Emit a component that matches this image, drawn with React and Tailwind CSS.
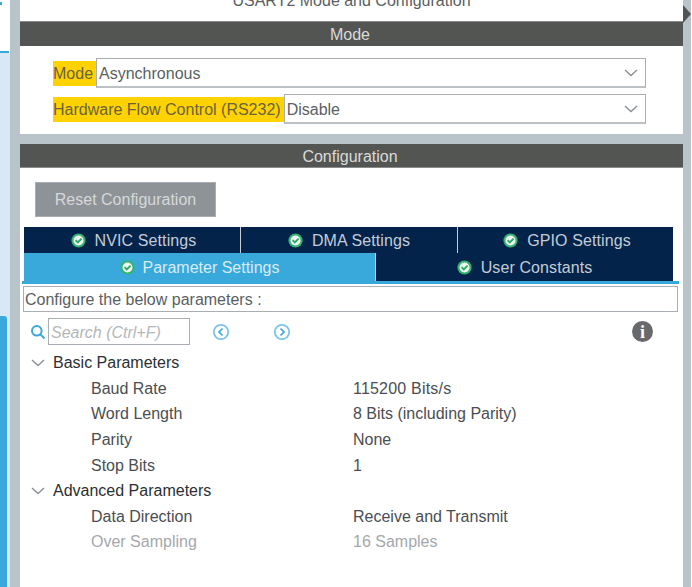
import React from "react";

const Check = () => (
  <svg width="15" height="15" viewBox="0 0 15 15" className="shrink-0">
    <circle cx="7.5" cy="7.5" r="7.1" fill="#34b36f" />
    <circle cx="7.5" cy="7.5" r="5" fill="#eef7f2" />
    <path d="M4.6 7.2 L6.8 9.4 L10.6 5.6" fill="none" stroke="#2fa866" strokeWidth="1.9" />
  </svg>
);

const Chevron = ({ className = "" }) => (
  <svg width="14" height="8" viewBox="0 0 14 8" className={className}>
    <path d="M1 1 L7 6.5 L13 1" fill="none" stroke="#8b9094" strokeWidth="1.4" />
  </svg>
);

const Tab = ({ label, className = "" }) => (
  <div className={`flex items-center justify-center gap-[9px] bg-[#03234b] pt-[2px] text-[#c3ccd6] ${className}`}>
    <span className="-mt-[2px]"><Check /></span>
    <span className="tracking-[0.1px]">{label}</span>
  </div>
);

const Select = ({ value, className = "" }) => (
  <div className={`flex items-center justify-between border border-[#a9aeb4] border-b-2 border-b-[#bcc1c5] bg-white pl-[2px] pr-[7px] text-[#5a5f63] ${className}`}>
    <span className="pt-[2px]">{value}</span>
    <Chevron />
  </div>
);

const Row = ({ label, value, muted, wide }) => (
  <div className={`flex h-[25.6px] items-center pl-[71px] ${muted ? "text-[#a5a8ab]" : "text-[#4a4e52]"}`}>
    <span className="w-[262px]">{label}</span>
    <span className={wide ? "tracking-[0.2px]" : ""}>{value}</span>
  </div>
);

const Group = ({ label }) => (
  <div className="flex h-[25.6px] items-center pl-[11px] text-[#2b2f33]">
    <Chevron className="mr-[8px]" />
    <span>{label}</span>
  </div>
);

const Nav = ({ d }) => (
  <svg width="18" height="18" viewBox="0 0 18 18">
    <circle cx="9" cy="9" r="7.2" fill="none" stroke="#7cc4ea" strokeWidth="1.8" />
    <path d={d} fill="none" stroke="#39a9dc" strokeWidth="1.7" />
  </svg>
);

export default function App() {
  return (
    <div className="flex h-[587px] w-[692px] overflow-hidden bg-white font-['Liberation_Sans',Arial,sans-serif] text-[16px]">
      <div className="relative flex w-[10px] shrink-0 flex-col">
        <div className="absolute left-0 top-[2px] h-[3px] w-[2px] bg-[#39a9dc]" />
        <div className="h-[51px] bg-white" />
        <div className="h-[2px] w-[9px] bg-[#39a9dc]" />
        <div className="flex flex-1 flex-col justify-end bg-[#d9e8f5]">
          <div className="h-[271px] w-[7px] rounded-tr-[3px] bg-[#39a9dc]" />
        </div>
      </div>
      <div className="w-[10px] shrink-0 bg-[#b8c3ca]" />

      <div className="flex w-[663px] shrink-0 flex-col">
        <div className="flex h-[21px] items-end justify-center overflow-hidden bg-white pb-[7px] text-[#5a5f63]">
          <span className="leading-[26px] whitespace-nowrap">USART2 Mode and Configuration</span>
        </div>
        <div className="flex h-[25px] items-center justify-center border-t border-[#8a8c8b] bg-[#535553] pr-[3px] pt-[1px] text-[#d9dbda]">Mode</div>

        <div className="flex h-[88px] flex-col gap-[6px] bg-white pl-[33px] pt-[12px]">
          <div className="flex h-[30px] w-[593px] items-center">
            <span className="flex h-[25px] items-center bg-[#ffd200] pr-[3px] pt-[2px] text-[#6a6340]">Mode</span>
            <Select value="Asynchronous" className="h-[30px] flex-1" />
          </div>
          <div className="flex h-[30px] w-[593px] items-center">
            <span className="flex h-[25px] items-center bg-[#ffd200] pr-[3px] pt-[2px] text-[#6a6340]">Hardware Flow Control (RS232)</span>
            <Select value="Disable" className="h-[30px] flex-1" />
          </div>
        </div>

        <div className="h-[10px] bg-[#b8c3ca]" />
        <div className="flex h-[24px] items-center justify-center border-b border-[#8a8c8b] bg-[#535553] pr-[3px] pt-[2px] text-[#d9dbda]">Configuration</div>

        <div className="flex flex-1 flex-col bg-white">
          <div className="ml-[15px] mt-[14px] flex h-[35px] w-[181px] items-center justify-center border border-[#a8adb1] bg-[#8e9397] text-[#d6d8da]">
            Reset Configuration
          </div>

          <div className="ml-[4px] mt-[10px] flex w-[649px] flex-col gap-px bg-[#c5ccd2]">
            <div className="grid h-[25px] grid-cols-[216px_1px_216px_1px_215px]">
              <Tab label="NVIC Settings" className="pl-[3px]" />
              <div className="bg-[#c5ccd2]" />
              <Tab label="DMA Settings" />
              <div className="bg-[#c5ccd2]" />
              <Tab label="GPIO Settings" className="pl-[3px]" />
            </div>
            <div className="grid h-[28px] grid-cols-[351px_1px_297px]">
              <div className="flex items-center justify-center gap-[8px] bg-[#39a9dc] pt-[2px] text-[#d8ecf8]">
                <span className="-mt-[2px]"><Check /></span>
                <span>Parameter Settings</span>
              </div>
              <div className="bg-[#c5ccd2]" />
              <Tab label="User Constants" />
            </div>
          </div>
          <div className="ml-[2px] h-[3px] w-[657px] bg-[#39a9dc]" />

          <div className="ml-[3px] mt-[2px] flex h-[26px] w-[655px] items-center border border-[#a9aeb4] bg-white pl-[1px] pt-[2px] text-[#5a5f63]">
            Configure the below parameters :
          </div>

          <div className="mt-[6px] flex h-[27px] items-center pl-[10px]">
            <svg width="16" height="16" viewBox="0 0 16 16" className="mr-[2px]">
              <circle cx="6.8" cy="6.8" r="4.8" fill="none" stroke="#39a9dc" strokeWidth="2" />
              <path d="M10.4 10.4 L14.5 14.5" stroke="#39a9dc" strokeWidth="2" />
            </svg>
            <div className="flex h-[27px] w-[142px] items-center border border-[#a9aeb4] pl-[2px] pt-[2px] italic text-[#b4b7ba]">Search (Ctrl+F)</div>
            <div className="ml-[22px]"><Nav d="M10.5 5.5 L7 9 L10.5 12.5" /></div>
            <div className="ml-[43px]"><Nav d="M7.5 5.5 L11 9 L7.5 12.5" /></div>
            <div className="ml-[341px] flex h-[21px] w-[21px] items-center justify-center rounded-full bg-[#67696b] font-['Liberation_Serif',serif] text-[18px] font-bold leading-none text-white">i</div>
          </div>

          <div className="mt-[5.4px] flex flex-col">
            <Group label="Basic Parameters" />
            <Row label="Baud Rate" value="115200 Bits/s" wide />
            <Row label="Word Length" value="8 Bits (including Parity)" />
            <Row label="Parity" value="None" />
            <Row label="Stop Bits" value="1" />
            <Group label="Advanced Parameters" />
            <Row label="Data Direction" value="Receive and Transmit" />
            <Row label="Over Sampling" value="16 Samples" muted />
          </div>
        </div>
      </div>

      <div className="relative w-[8px] shrink-0 bg-[#b8c3ca]">
        <svg width="8" height="18" viewBox="0 0 8 18" className="absolute left-0 top-[5px]">
          <path d="M0 0 L8 9 L0 18 Z" fill="#4f5355" />
        </svg>
      </div>
      <div className="flex-1 bg-white" />
    </div>
  );
}
